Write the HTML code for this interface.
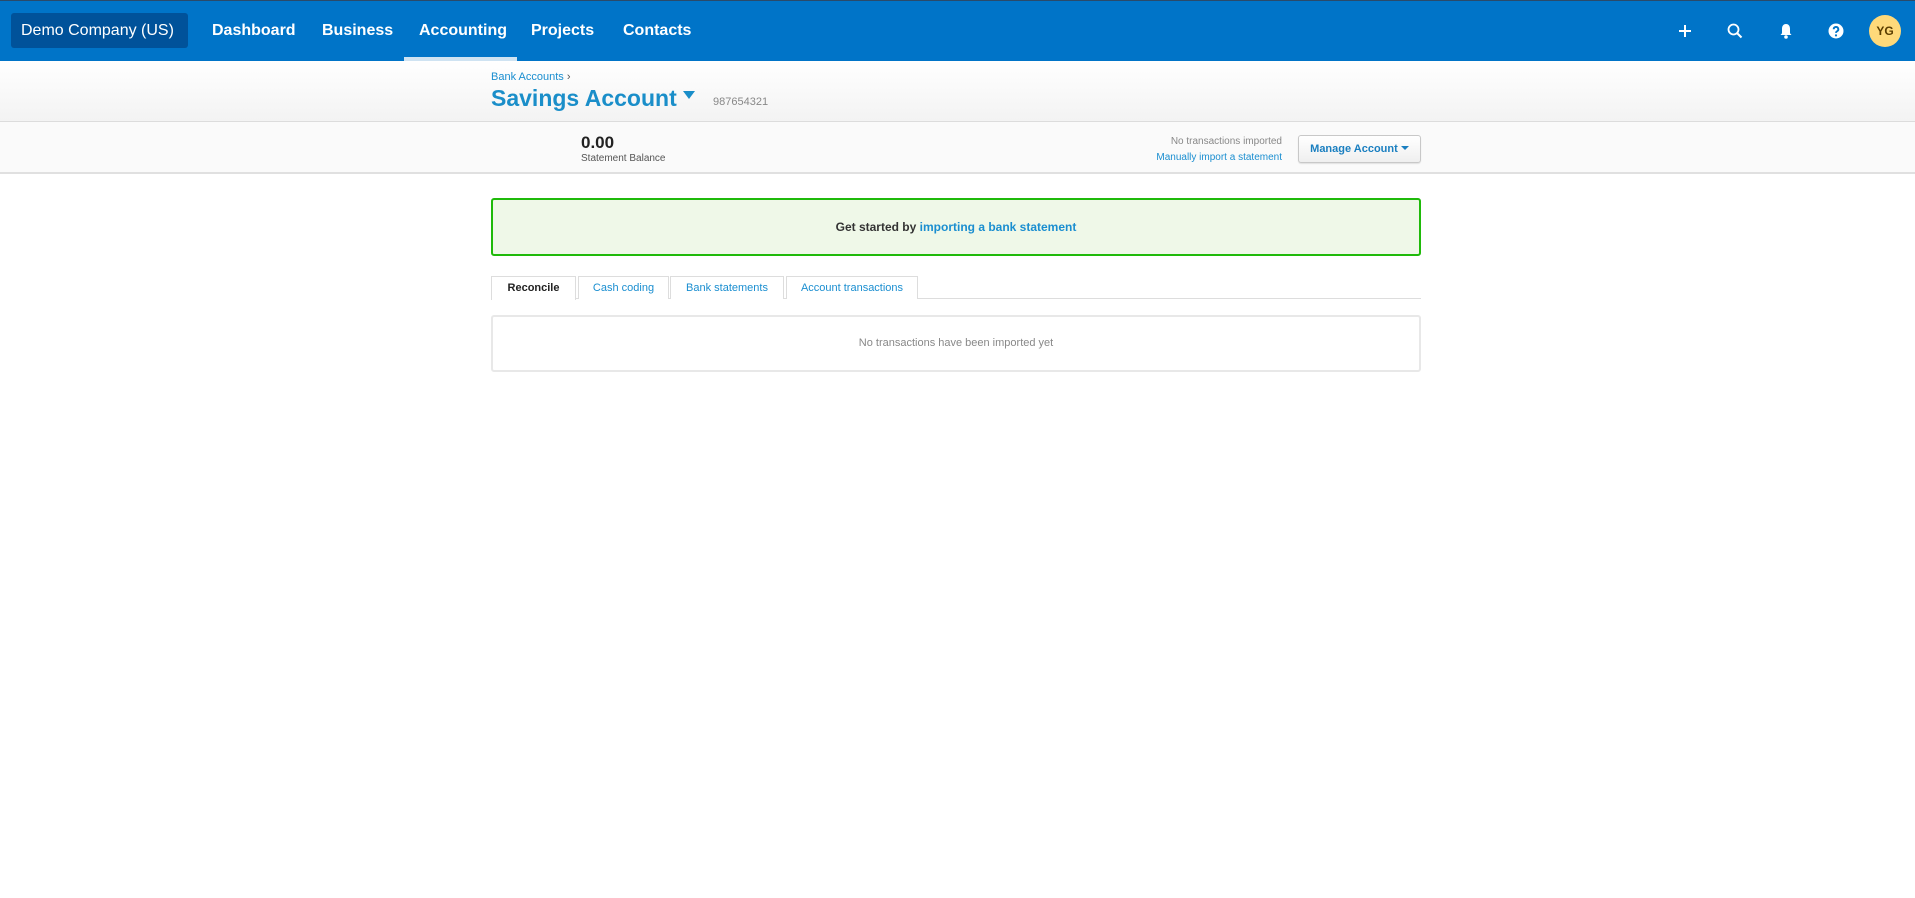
<!DOCTYPE html>
<html><head><meta charset="utf-8"><style>
*{box-sizing:border-box;margin:0;padding:0}
body{width:1915px;height:898px;background:#fff;font-family:"Liberation Sans",sans-serif;position:relative;overflow:hidden}
.a{position:absolute}
.nav{left:0;top:0;width:1915px;height:61px;background:#0074c8;border-top:1px solid #2a4a6a}
.ni{top:21px;color:#fff;font-weight:bold;font-size:16px}
.hdr{left:0;top:61px;width:1915px;height:61px;background:linear-gradient(#fff,#f3f3f3);border-bottom:1px solid #dcdcdc}
.st{left:0;top:122px;width:1915px;height:52px;background:#fafafa;border-bottom:2px solid #e0e0e0}
.tab{top:276px;height:23px;border:1px solid #ddd;border-bottom:none;font-size:11px;color:#1a8ed0;text-align:center;line-height:22px;background:#fff}
</style></head><body>
<div class="a nav">
 <div class="a" style="left:11px;top:12px;width:177px;height:35px;background:#00529a;border-radius:3px;color:#fff;font-size:16px;line-height:35px;padding-left:10px">Demo Company (US) <span style="display:inline-block;border:5px solid transparent;border-top:6px solid #fff;vertical-align:-3px;margin-left:2px"></span></div>
 <div class="a ni" style="left:212px">Dashboard</div>
 <div class="a ni" style="left:322px">Business</div>
 <div class="a ni" style="left:419px">Accounting</div>
 <div class="a ni" style="left:531px">Projects</div>
 <div class="a ni" style="left:623px">Contacts</div>
 <div class="a" style="left:404px;top:56px;width:113px;height:4px;background:#cfe3f2"></div>
 <svg class="a" style="left:1676px;top:21px" width="18" height="18"><path d="M9 3v12M3 9h12" stroke="#fff" stroke-width="2"/></svg>
 <svg class="a" style="left:1726px;top:21px" width="18" height="18"><circle cx="7.5" cy="7.5" r="5" stroke="#fff" stroke-width="1.8" fill="none"/><path d="M11 11l4.5 4.5" stroke="#fff" stroke-width="2"/></svg>
 <svg class="a" style="left:1777px;top:20px" width="18" height="20"><path d="M9 3c-2.8 0-4 2.3-4 4.8v4.5L3.5 14h11L13 12.3V7.8C13 5.3 11.8 3 9 3z" fill="#fff"/><circle cx="9" cy="16" r="1.8" fill="#fff"/></svg>
 <svg class="a" style="left:1827px;top:21px" width="18" height="18"><circle cx="9" cy="9" r="7.5" fill="#fff"/><path d="M6.7 7.2a2.3 2.3 0 1 1 3.3 2.1c-.7.4-1 .8-1 1.6" stroke="#0074c8" stroke-width="1.9" fill="none"/><circle cx="9" cy="13.4" r="1.1" fill="#0074c8"/></svg>
 <div class="a" style="left:1869px;top:14px;width:32px;height:32px;border-radius:50%;background:#fed97a;color:#5a3d00;font-size:12px;font-weight:bold;text-align:center;line-height:32px">YG</div>
</div>
<div class="a hdr">
 <div class="a" style="left:491px;top:10px;font-size:11px;color:#1a8ed0">Bank Accounts <span style="color:#555">›</span></div>
 <div class="a" style="left:491px;top:24px;font-size:23px;font-weight:bold;color:#1a8ec9">Savings Account <span style="display:inline-block;border:6px solid transparent;border-top:8px solid #1a8ec9;vertical-align:1px"></span></div>
 <div class="a" style="left:713px;top:35px;font-size:11px;color:#888">987654321</div>
</div>
<div class="a st">
 <div class="a" style="left:581px;top:11px;font-size:17px;font-weight:bold;color:#222">0.00</div>
 <div class="a" style="left:581px;top:31px;font-size:10px;color:#555">Statement Balance</div>
 <div class="a" style="right:633px;top:14px;font-size:10px;color:#888;text-align:right">No transactions imported</div>
 <div class="a" style="right:633px;top:30px;font-size:10px;color:#1a8ed0;text-align:right">Manually import a statement</div>
 <div class="a" style="left:1298px;top:13px;width:123px;height:28px;border:1px solid #c8c8c8;border-radius:3px;background:linear-gradient(#fff,#efefef);box-shadow:0 1px 1px rgba(0,0,0,.1);font-size:11px;font-weight:bold;color:#1a7fc0;line-height:26px;text-align:center">Manage Account <span style="display:inline-block;border:4px solid transparent;border-top:4px solid #1a7fc0;vertical-align:-2px"></span></div>
</div>
<div class="a" style="left:491px;top:198px;width:930px;height:58px;border:2px solid #1fba0a;border-radius:3px;background:#eff8e8;font-size:12px;font-weight:bold;color:#333;text-align:center;line-height:54px">Get started by <span style="color:#1a8ed0">importing a bank statement</span></div>
<div class="a" style="left:491px;top:298px;width:930px;height:1px;background:#ddd"></div>
<div class="a tab" style="left:491px;width:85px;color:#222;font-weight:bold;height:24px">Reconcile</div>
<div class="a tab" style="left:578px;width:91px">Cash coding</div>
<div class="a tab" style="left:670px;width:114px">Bank statements</div>
<div class="a tab" style="left:786px;width:132px">Account transactions</div>
<div class="a" style="left:491px;top:315px;width:930px;height:57px;border:2px solid #e8e8e8;border-radius:3px;font-size:11px;color:#888;text-align:center;line-height:53px">No transactions have been imported yet</div>
</body></html>
